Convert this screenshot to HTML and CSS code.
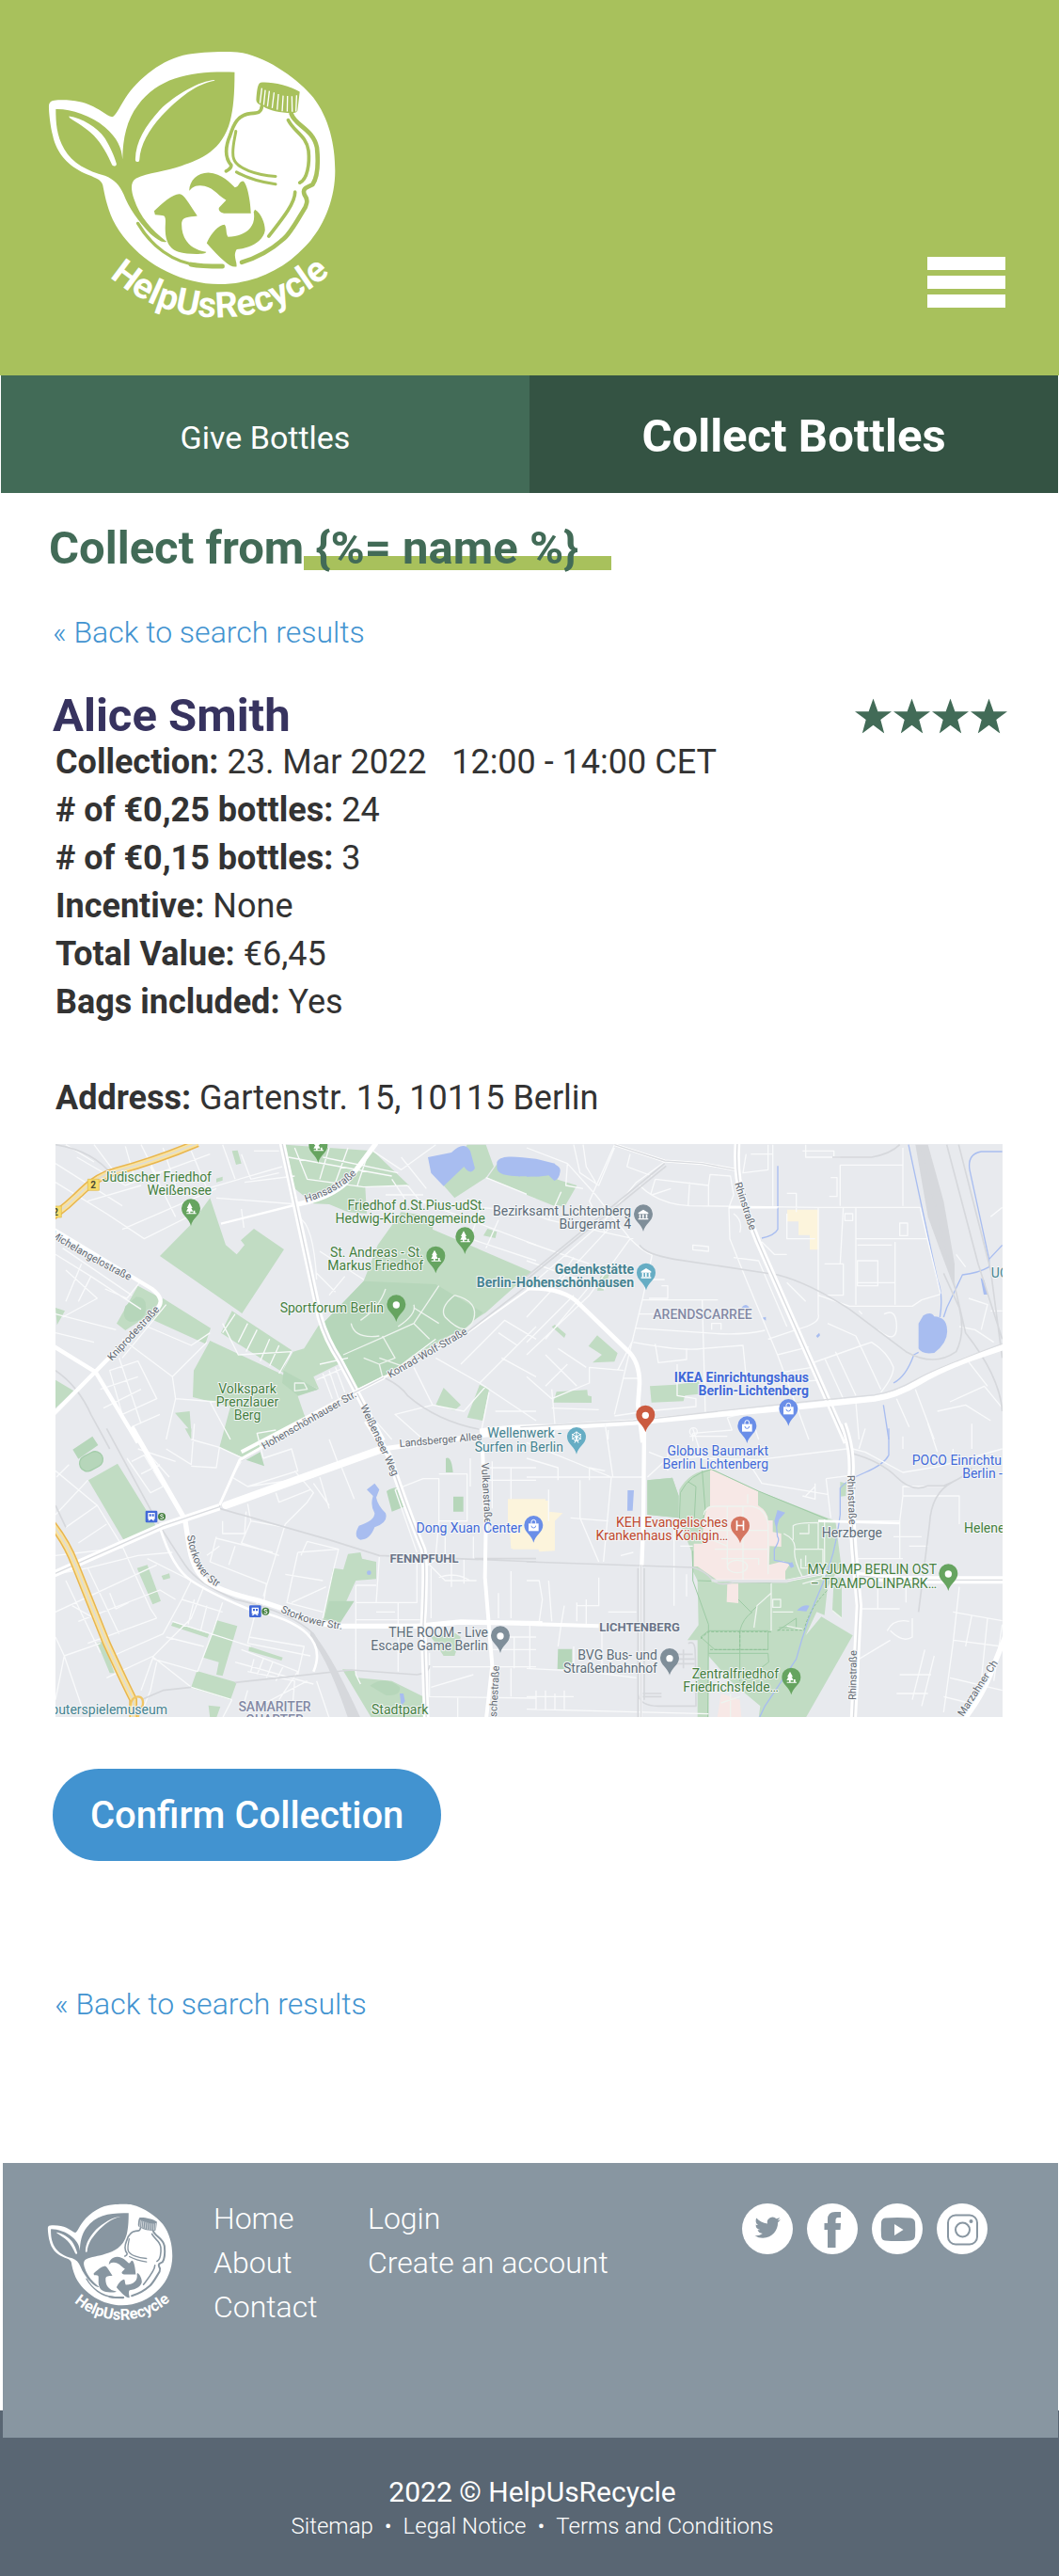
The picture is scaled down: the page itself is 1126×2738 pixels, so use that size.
FILE: index.html
```html
<!DOCTYPE html>
<html lang="en">
<head>
<meta charset="utf-8">
<meta name="viewport" content="width=device-width, initial-scale=1">
<title>HelpUsRecycle – Collect Bottles</title>
<link rel="stylesheet" href="styles.css">
</head>
<body>

<svg class="sprite" aria-hidden="true">
  <symbol id="logo" viewBox="150 158 925 868">
    <path class="ink" d="M358 372C368 370 378 348 400 312C440 250 520 185 600 172C640 165 740 160 775 168C860 185 955 255 1000 310C1050 375 1070 460 1070 545C1070 640 1030 730 975 785C900 866 800 906 700 906C560 906 420 820 360 700C340 655 334 620 328 590C323 570 300 565 270 552C220 530 180 490 168 430C160 400 155 350 156 335C158 322 168 319 185 318C280 315 310 347 350 370Z"/>
    <path class="cut" d="M749 229C749 300 745 345 735 385C710 480 640 508 580 528C530 546 470 550 435 568C415 580 418 605 428 635C445 690 490 740 532 770C520 777 500 762 480 745C440 705 410 660 395 620C382 590 365 572 335 560C280 545 230 520 205 475C180 430 178 390 178 347C220 345 290 365 335 405C375 440 388 470 391 507C392 440 405 380 440 335C510 240 620 225 749 229Z"/>
    <path class="ink" d="M685 254C640 256 560 300 510 350C465 400 433 450 432 508a6 6 0 0 0 13 2C448 460 475 415 515 370C570 310 630 265 685 256Z"/>
    <path class="ink" d="M220 370C260 375 310 405 335 440C350 465 365 495 372 522c0 8-12 10-15 2C345 495 325 458 300 432C275 408 245 390 222 375Z"/>
    <path class="cut" d="M832 262C860 258 925 270 957 292L950 352Q946 361 930 360C895 358 860 352 840 338Q818 330 818 318C820 290 822 265 832 262Z"/>
    <path class="rib" d="M836 280l-6 48M847 286l-5 48M860 289l-6 50M875 294l-6 50M889 299l-4 50M904 304l-3 50M918 305l-1 50M932 306l1 50M947 303l-2 52"/>
    <g class="line">
      <path stroke-width="11" d="M836 338C834 358 825 359 800 361C758 365 745 398 735 430C720 465 716 500 738 526C739 534 732 540 722 545"/>
      <path stroke-width="9" d="M753 418C750 440 738 480 746 505C756 538 820 558 880 562"/>
      <path stroke-width="9" d="M755 548C790 568 840 581 880 587"/>
      <path stroke-width="14" d="M930 362C942 400 1000 410 1012 470C1018 530 1010 570 998 588C975 598 965 602 972 620C986 640 978 650 975 660C950 700 930 740 905 762C865 798 820 822 772 836"/>
      <path stroke-width="11" d="M920 382C938 420 978 430 985 480C989 520 982 572 957 582"/>
      <path stroke-width="11" d="M942 612C942 650 895 705 858 753"/>
      <path stroke-width="10" d="M440 712C480 780 550 840 640 846"/>
      <path stroke-width="15" d="M610 843Q640 849 710 849"/>
    </g>
    <path class="cut" d="M604 608C605 575 630 550 665 550C710 552 735 585 750 597C765 595 762 578 775 577C788 578 800 640 801 680L715 680C700 678 694 665 702 659L722 638C690 618 678 592 640 591C618 590 612 600 604 608Z"/>
    <path class="cut" d="M492 672C520 645 550 620 572 618C587 616 600 645 630 688C600 692 583 690 580 710C578 760 605 795 658 803C662 812 600 812 570 803C530 790 526 750 528 715C530 680 525 688 495 684Z"/>
    <path class="cut" d="M814 668C835 680 847 715 846 735C842 765 805 790 756 795C742 815 758 835 755 850C735 855 705 825 660 775C670 750 695 717 717 716C725 725 720 745 728 755C790 752 818 720 810 675Z"/>
    <path id="logo-arc" fill="none" d="M350 882A525 525 0 0 0 1068 858"/>
    <text class="logo-text"><textPath href="#logo-arc">HelpUsRecycle</textPath></text>
  </symbol>

  <symbol id="star" viewBox="0 0 40 38"><path d="M20 0L25 14H40L28 23L32 38L20 29L8 38L12 23L0 14H15Z"/></symbol>

  <g id="g-pin"><path d="M0 0C-5-24-30-32-30-56a30 30 0 1 1 60 0C30-32 5-24 0 0Z"/></g>
  <g id="g-dot"><use href="#g-pin"/><circle class="glyph" cy="-54" r="11"/></g>
  <g id="g-tree"><use href="#g-pin"/><path class="glyph" d="M-4-74L-13-57H-9L-15-46H-7V-41H-14V-38H17V-41H13V-49H8V-41H-2V-46H7L1-57H5Z"/></g>
  <g id="g-bag"><use href="#g-pin"/><path class="glyph" d="M-16-61H16V-37H-16Z"/><path class="glyph-line" d="M-7-60V-66a7 7 0 0 1 14 0V-60"/><path class="glyph-cut" d="M-7-54a7 7 0 0 0 14 0"/></g>
  <g id="g-hall"><use href="#g-pin"/><path class="glyph" d="M-16-60L0-70L16-60V-56H-16ZM-16-42H16V-38H-16ZM-13-55h5v12h-5ZM-3-55h5v12h-5ZM8-55h5v12h-5Z"/></g>
  <g id="g-wheel"><use href="#g-pin"/><circle class="glyph-line" cy="-56" r="13"/><circle class="glyph" cy="-56" r="4"/><path class="glyph-line" d="M0-73V-40M-15-64L15-48M15-64L-15-48M-6-36L0-54L6-36"/></g>
  <g id="g-h"><use href="#g-pin"/><path class="glyph" d="M-13-72h5v13h16v-13h5v31h-5v-13h-16v13h-5Z"/></g>
  <g id="g-train"><rect class="train" x="-19" y="-19" width="38" height="38" rx="4"/><path class="glyph" d="M-11-12h22v20h-5l4 5h-5l-3-4h-5l-3 4h-5l4-5h-4Z"/><path class="train" d="M-7-8h6v7h-6ZM2-8h6v7h-6Z"/><circle class="sbahn" cx="33" r="12"/><path class="glyph-line" d="M38-5q-8-4-9 0t5 5t4 5t-10 1"/></g>
</svg>

<header class="top">
  <a class="top-logo" href="#" aria-label="HelpUsRecycle home"><svg viewBox="150 158 925 868" aria-hidden="true"><use href="#logo" x="150" y="158" width="925" height="868"/></svg></a>
  <button class="menu" type="button" aria-label="Menu"><span></span><span></span><span></span></button>
</header>

<nav class="tabs" aria-label="Sections">
  <a class="tab" href="#">Give Bottles</a>
  <a class="tab tab-current" href="#" aria-current="page">Collect Bottles</a>
</nav>

<main class="page">
  <h1 class="title">Collect from<span class="mark"> {%= name %}</span></h1>

  <article class="offer">
    <a class="back" href="#">« Back to search results</a>
    <div class="person">
      <h2 class="name">Alice Smith</h2>
      <div class="stars" role="img" aria-label="4 stars">
        <svg viewBox="0 0 40 38"><use href="#star"/></svg><svg viewBox="0 0 40 38"><use href="#star"/></svg><svg viewBox="0 0 40 38"><use href="#star"/></svg><svg viewBox="0 0 40 38"><use href="#star"/></svg>
      </div>
    </div>
    <div class="details">
      <p><b>Collection:</b> 23. Mar 2022 &nbsp; 12:00 - 14:00 CET</p>
      <p><b># of €0,25 bottles:</b> 24</p>
      <p><b># of €0,15 bottles:</b> 3</p>
      <p><b>Incentive:</b> None</p>
      <p><b>Total Value:</b> €6,45</p>
      <p><b>Bags included:</b> Yes</p>
      <p class="address"><b>Address:</b> Gartenstr. 15, 10115 Berlin</p>
    </div>

    <svg class="map" viewBox="0 0 1007 609" role="img" aria-label="Map of the pick-up address">
      <!-- north-west -->
      <g transform="translate(-9 -6) scale(.33333)">
        <path class="park" d="M360 375L458 275L520 190L570 340L605 370L630 340L618 325L660 288L756 354L622 558ZM520 645L660 710L745 750L800 780L865 800L800 822L820 880L830 900L700 975L625 1018L550 985L585 855L465 825L468 740ZM370 510L522 605L505 655L330 575ZM590 550L780 675L750 745L555 620ZM290 470L365 510L330 560L250 612L222 590ZM760 20L1040 40L1155 150L1015 155L1020 240L960 235L900 210L850 208L790 160ZM1010 455L1055 340L1130 235L1235 250L1230 290L1545 425L1400 555L1250 650L985 800L935 700L880 590ZM785 680L820 670L870 590L930 720L850 760L868 800L750 745ZM1340 20L1400 20L1425 90L1400 125L1300 190L1265 150ZM1440 75L1560 110L1690 150L1650 220L1560 190L1405 125ZM1265 795L1320 850L1300 868L1240 850ZM1380 785L1410 800L1390 900L1340 890ZM27 770L85 805L27 860ZM408 875L455 870L460 935ZM590 40L608 38L620 80L603 84ZM540 128l20-6v12l-20 6ZM1405 288l30 10-5 20-38-8ZM27 540l30 10-25 45Z"/>
        <path class="park-dark" d="M1010 455L1240 465L1390 555L1330 610L1240 645L1100 745L985 800L935 700L880 590ZM285 505q35 0 30 40t-50 40q-30-10-15-50ZM755 740l110 60-65 20-50-40Z"/>
        <path class="water" d="M1215 60L1290 45Q1330 5 1350 40L1365 95Q1350 120 1330 90L1265 152L1225 110ZM1435 75C1450 50 1500 60 1560 65L1620 80Q1640 110 1620 138L1590 122C1500 120 1440 125 1435 95Z"/>
        <path class="lane" d="M27 80L240 215M27 140L190 240L310 320L470 240M95 60L250 150L520 50M60 20L150 75M150 20L210 100M250 25L280 130M300 20L345 110L395 100M370 30L420 180M460 40L510 160L750 90M560 20L600 130M620 50L650 130L740 110M240 290L540 160M130 200L300 150M330 90L410 250M540 190L800 210M620 225l8 60M660 40h80M630 140L790 120M800 250q50 20 60 200M870 360L1010 450M860 430l60 60M900 500l50-60M27 370L140 440L300 545M50 350L270 500M60 420l100 90-110 60M110 400L60 520M140 440l-40 80M185 480l70 30 40-50M27 560L220 610M27 620L150 650M380 530L240 700M320 600L460 660L520 620M240 640L400 760L510 650M400 760L410 830L540 840M200 740L290 710L350 830L240 880ZM230 700l70 210M170 800l120-40M300 800L180 860M270 920L360 880M410 830L380 960M520 840L585 960M560 590L610 690L780 680M600 560l-40 60M640 590l-30 60M670 610l-35 70M710 640l-30 70M740 660l-30 65M780 680l-40 70M790 30L830 130L1010 155L1150 150M880 60L1120 110M900 30L870 130M960 30L920 140M1020 60L990 150M770 60l330 60M1040 40L1130 100L1240 20M1130 60l80 100M1150 150L1190 200L1480 230M1400 125L1560 190M1190 200L1560 340M1380 230L1350 320L1560 390M1440 260l-40 90M870 720L960 700M880 750l30 80M900 740l30 90M920 730l30 80M860 770l90-40M1080 760L1240 640M1170 730L1230 850L1330 870L1400 790M1240 700L1380 780L1560 900M1320 720L1460 580L1560 640M1380 780L1560 600M1450 700L1560 760M1500 660L1440 620M1410 810L1380 960M1430 870h130M1230 850L1110 880L1200 960M830 900L900 870M1030 880L1100 960M1080 180h120M1100 130l40 60"/>
        <path class="path" d="M945 690Q1060 640 1170 590L1250 470M1170 540L1250 590M1170 590L1220 640M1070 630L1110 700L1060 720M1120 600Q1180 560 1170 530M1000 580Q1060 540 1080 480M970 590Q980 640 1060 630M1300 500Q1380 520 1360 580T1270 570Q1250 540 1300 500M1010 700l50 20 10 40M1060 700l70 25M790 780h30l10 20-40 5Z"/>
        <path class="rail" d="M27 740Q100 790 140 880L200 990M27 20Q150 40 210 120M1080 765Q1130 790 1150 820Q1300 950 1560 940"/>
        <path class="road" stroke-width="13" d="M20 290L335 480Q380 515 350 545L20 880"/>
        <path class="road" stroke-width="13" d="M20 662L155 745L290 970"/>
        <path class="road" stroke-width="16" d="M1050 15Q980 110 950 145Q900 190 800 210"/>
        <path class="road" stroke-width="7" d="M800 210L555 272"/>
        <path class="road" stroke-width="20" d="M750 15L870 570Q890 640 935 710L1070 965"/>
        <path class="divider" d="M750 15L870 570Q890 640 935 710L1070 965"/>
        <path class="road" stroke-width="12" d="M620 1000L985 808L1075 762"/>
        <path class="divider" d="M880 870L985 808L1075 762"/>
        <path class="road" stroke-width="6" d="M1075 762L1340 620L1580 450"/>
        <path class="rail" d="M1330 625L1570 440"/>
        <path class="major-edge" d="M0 262Q60 220 110 170T220 105Q350 70 480 15"/><path class="major" d="M0 262Q60 220 110 170T220 105Q350 70 480 15"/><path class="divider" d="M0 262Q60 220 110 170T220 105Q350 70 480 15"/>
        <path class="shield" d="M130 130h36v36h-36ZM10 216h36v36h-36Z"/>
      </g>
      <!-- north-east -->
      <g transform="translate(501 -6) scale(.33333)">
        <path class="park" d="M0 130L80 115L125 155L95 218L0 180ZM90 594l35 30-5 12-40-35ZM225 628L290 685L280 712L210 715L240 690L197 662ZM95 808L193 802L195 820L207 823V843L85 842ZM393 790L475 785L550 775V815L505 820L500 838L398 842ZM235 440l30-10-20 55h-20ZM0 422l12 8-12 12Z"/>
        <path class="yellow" d="M831 227H932V355H903V308H867V265H831Z"/>
        <path class="water" d="M1250 590L1265 565Q1290 550 1300 568Q1340 570 1341 610Q1345 650 1300 684Q1260 690 1250 670ZM1448 445l12 8 10 45h-12ZM685 540q15-20 27 3l-5 10ZM751 572l12-3v12ZM923 630l10-10 3 8-8 8ZM0 66L60 80Q110 80 107 105T88 135L70 118L0 122Z"/>
        <path class="river" d="M1218 20L1310 450Q1330 500 1318 570M1517 42H1450Q1405 50 1413 100L1475 385V410Q1440 430 1390 435L1340 540L1330 570M1475 385L1517 340M1250 682L1235 690Q1210 760 1170 780M801 88V290Q790 310 750 318M1138 850L1155 960"/>
        <path class="lane" d="M0 30L130 80L220 180L330 320Q370 360 400 372L370 510L280 880M150 20L170 110L230 150L280 30M180 20L190 90L220 140M280 20L200 200L250 300M440 75L350 140L250 260L0 480M330 50L320 90L400 120M360 150Q420 210 520 215L930 220M410 130L580 150L585 115L650 120L660 180L645 220L648 320L700 450L800 690L900 960M520 140L515 215M580 150V215M400 180L460 160M410 130L395 180M130 80L125 150L180 160M0 230L70 260L110 170M70 260L340 320M0 330L200 400M0 390L250 480M150 380L80 480M260 290L0 570M330 320L200 500L0 690M150 500L0 650M210 460L60 640M370 515H610M560 515L570 880M360 560H470M345 605L570 620Q680 630 760 612M340 650Q500 680 560 670L690 660L700 760M410 655L420 715L510 705V670M0 760L80 830L200 780V730L310 740M60 690L160 790M100 670L190 730M130 720L60 790M80 800L90 910M80 860L230 865M340 640L290 740M310 765H360M280 885L380 870L540 855V830L480 820V720M640 890L720 870M640 890L655 930L530 940M530 940v25M785 20V215M700 50L690 110L770 100V20M715 50h70M880 40H980V60M890 20V60H1000M1000 85H1200V215M1000 85V215M970 125h20v60h-25M830 175h30v60M830 240v80h90M930 222V560Q940 590 860 610L770 640M1050 220V530M1050 320H1278L1255 220H930M1015 240h25v22h-25ZM1055 340H1165M1190 270h25v40h-25ZM1175 330V530M1055 460H1175M1055 390h65v80h-65ZM950 400H1010V500H950M1010 220L1000 400M930 500L1030 535H1230L1260 515L1320 497M1200 90v-60M1278 320L1320 495M1140 560q40-20 40 40t-60 10M1060 550l10 10M960 590L1050 630L1130 800M1070 660L1100 650Q1150 680 1170 730Q1170 760 1130 810M950 700L1010 830M985 680L1050 820M900 720L1070 660M800 690L900 665M820 745L910 730M830 780L940 770M660 380L740 390L830 600M660 240q30 20 20 60M530 340l50 5v15l-50-5ZM780 430L860 600M830 460L890 520M750 330L790 370H830M430 470h20v40h-60M380 450h60M590 610v-20h30v20M1050 840L1060 960M1240 800L1300 960M1310 870L1400 850L1480 900M1350 840L1460 790L1517 860M1180 830L1220 920M1400 700L1470 790M1370 370L1400 410M1410 510l60 20-20 80M1380 600L1430 610L1490 650M1480 250l37-30M1480 550h37M520 950h120M720 900L740 960M260 930V960"/>
        <path class="rail-wide" d="M1240 20H1280L1330 200L1365 400V480L1320 360L1280 250Z"/>
        <path class="rail" d="M1340 20L1440 400L1517 640M1378 20L1480 420L1517 700M1260 30L1365 470L1400 620Q1510 760 1517 870M360 340Q380 370 470 385L800 435Q900 460 1030 545L1210 680Q1300 730 1370 680Q1400 620 1380 540L1330 430M975 60H1100Q1160 50 1190 20M0 440L440 80M0 450L445 88"/>
        <path class="road" stroke-width="14" d="M0 478Q120 475 170 530L320 675Q360 710 360 780L355 850L370 970"/>
        <path class="road" stroke-width="9" d="M280 20L440 72L560 80L665 100"/><path class="divider" d="M280 20L440 72L560 80L665 100"/>
        <path class="road" stroke-width="20" d="M672 15Q665 120 690 190Q710 270 760 380L1020 970"/><path class="divider" d="M672 15Q665 120 690 190Q710 270 760 380L1020 970"/>
        <path class="road" stroke-width="7" d="M645 220H800"/>
        <path class="road" stroke-width="19" d="M-150 935Q-50 920 100 920L340 905L840 858L1110 830Q1180 820 1250 778T1420 700L1530 662"/>
        <path class="divider" d="M-20 920L340 900L900 838L1110 818Q1170 810 1240 770T1530 650"/>
      </g>
      <!-- south-west -->
      <g transform="translate(-9 304) scale(.33333)">
        <path class="park" d="M132 160L225 107L350 310L245 352ZM287 440L320 430L363 545L337 556ZM365 465l25-8 3 15-22 6ZM540 606L607 625L560 784L540 780L548 740L498 725ZM402 612L517 650L512 662L396 624ZM645 690L752 725L748 735L643 704ZM478 768L605 805L585 860L459 822ZM515 878L553 882L540 918H520ZM912 440L945 445L960 395L1000 390L1005 410L1050 420V475L985 480L955 545L935 615L880 605ZM942 763L980 765L990 790L1100 800L1200 850V918H1035ZM1225 660L1290 640L1320 660L1300 720H1265ZM160 678L180 675L215 775H200ZM440 -5h20v35Z"/>
        <path class="park-dark" d="M82 62L145 20L163 48L100 92ZM1083 195Q1105 180 1122 185L1138 245L1100 260ZM1296 212H1328V260H1296ZM1272 90Q1290 80 1295 135H1272ZM1030 815Q1080 780 1125 820Q1130 850 1080 845ZM635 95L680 70L693 115ZM900 545H980L935 615L885 600Z"/>
        <rect class="track" x="102" y="75" width="78" height="50" rx="25" transform="rotate(-28 141 100)"/>
        <path class="yellow" d="M1470 220H1590V280H1620V380H1485V330H1470Z"/>
        <path class="water" d="M1020 190L1045 170L1060 190L1050 215Q1055 240 1080 265Q1090 295 1045 310Q1030 350 1000 350Q975 340 995 305Q1045 290 1045 265Q1030 240 1040 210ZM1125 840h12l5 25-12 15ZM1020 455a7 7 0 1 0 14 0a7 7 0 1 0-14 0"/>
        <path class="lane" d="M27 130L160 240L240 370L330 570L350 600M70 110L30 150M130 160L27 270M160 240L60 310M190 300L100 360M27 400L240 375M27 460L130 440L290 400L400 390M130 440L230 650M60 480L170 710M27 580L350 430M80 560L150 600M100 610L360 510L410 540M130 680L350 600M55 720L170 680M200 520L220 570L260 550M27 660L55 720L27 860M55 720L110 880M210 720L370 650L430 540L460 480L320 410M190 790L340 720L460 600L500 500M340 720L300 830M340 730L480 770L530 640L560 550M340 725L460 820L590 860M380 660L500 690M400 610L650 690M430 540L560 580M470 540L450 620M510 560L490 640M350 740L330 830L310 880M590 860L560 918M640 770L790 800L780 918M600 740L850 810M620 700L800 770L740 860M660 600L640 680L840 720M645 660L820 690L800 780M660 730L650 770M690 730L670 780M720 740L700 790M755 750L730 800M830 800L640 900M860 800L900 918M640 830L620 900M255 90L330 200L370 180L310 80L270 100M300 140L360 110M310 60L390 150M380 60L460 110L470 -20M290 60L410 100M460 30L550 55L625 90L590 150L640 180L800 130L780 60L690 90M550 55L540 120L460 115M640 180L850 150M690 90L670 10L730 0M790 130L850 200L830 230L760 300L690 530M730 200L740 230L840 190M850 170L900 240M870 150L900 250M900 30L930 110M940 120L980 220M640 235L650 290L620 360L740 400M650 290L760 310M540 340L520 420L700 490M540 345L720 390M560 290v40h70l5-70M550 370L510 400M600 370L580 430M800 390L930 380L910 460L880 600M800 390L765 550L880 580M830 355L930 380M830 355L810 400M760 460L880 480M780 550L890 500M700 490L690 560M660 600L670 550M1110 190L1200 155L1250 155V290L1340 290L1340 140L1250 140M1110 190L1180 390M1060 405L1050 550H1180V400M985 495H1050M985 495V780L1000 810M985 550H1050M1120 550V770M1050 580h60M985 605H1190M1220 710V850L1560 855M1230 755H1560M1310 850V918M1225 820L1360 780M1260 400L1200 440V620M1220 430L1270 480L1370 480M1290 410V500M1330 410v80M1250 470q50-20 100 10M1225 600V440M1400 480L1410 620M1440 520V600M1480 520V600M1480 450V540M1410 700H1560M1430 660H1560M1490 660V760M1410 160H1560M1420 100V250M1480 120V220M1350 90V180M1400 120H1560M1360 340V410M1270 340v60M1250 290L1240 400M1480 760V850M1540 620V760"/>
        <path class="rail" d="M550 250L900 350L1060 400L1560 420M1365 410H1560M27 240L60 310M600 805L970 765L1180 780Q1220 775 1220 750M300 860L370 830L460 820M1205 400L1215 918"/>
        <path class="rail" stroke-width="13" d="M190 -5L350 290Q400 370 440 430T600 540Q780 580 850 650Q900 730 980 918"/>
        <path class="rail-wide" d="M840 640Q900 700 1000 918H960Q900 740 840 660Z"/>
        <path class="road" stroke-width="16" d="M270 -10L440 285L455 380Q470 460 520 490T680 545L770 575Q850 620 930 625H1180L1320 612L1580 617"/>
        <path class="road" stroke-width="8" d="M360 310Q400 440 460 480T640 570Q780 600 830 650T850 770"/>
        <path class="road" stroke-width="24" stroke-linecap="round" d="M570 240L1070 60"/>
        <path class="road" stroke-width="15" d="M1070 60L1400 15L1620 5"/>
        <path class="road" stroke-width="22" d="M20 460L370 305L550 245"/><path class="divider" d="M20 460L370 305L550 245L615 100L730 30"/>
        <path class="road" stroke-width="9" d="M550 240L615 95L800 -10"/>
        <path class="road" stroke-width="20" d="M1020 -30L1090 80Q1150 260 1200 380Q1210 420 1200 620L1210 930"/><path class="divider" d="M1090 80Q1150 260 1200 380Q1210 420 1200 620L1210 930"/>
        <path class="road" stroke-width="12" d="M1388 40L1400 300L1397 470L1420 750L1400 930"/>
        <path class="major-edge" d="M0 280Q60 350 90 430L190 680Q240 790 275 860V930"/><path class="major" d="M0 280Q60 350 90 430L190 680Q240 790 275 860V930"/><path class="divider" d="M0 280Q60 350 90 430L190 680Q240 790 275 860V930"/>
        <path class="ring" d="M265 880Q270 850 290 850T305 880Q290 890 290 930"/>
      </g>
      <!-- south-east -->
      <g transform="translate(501 304) scale(.33333)">
        <path class="park" d="M385 160L465 152L485 210V280L385 270ZM487 190Q520 130 590 125L740 195L985 290L1003 430L960 500L950 590L925 580L890 655L940 595L1040 655L890 918H740L745 880L650 800L580 720V918H545V670H513L548 622L545 480L530 450L525 385L487 290ZM1000 165L1020 170L1018 210L1000 212ZM980 470L1005 470V600L975 575Z"/>
        <path class="park-dark" d="M100 698H145V762H98ZM385 160L465 152L485 210V280L385 270Z"/>
        <path class="pink" d="M585 125L738 195V240Q770 260 770 288H785V325L812 330V372L775 370L773 430L820 418L838 430L825 450V480H610L545 435H533V362H560L565 270Q570 245 585 243ZM640 490H675V552L638 548ZM620 840L680 860L685 918H608Z"/>
        <path class="yellow" d="M-60 225H70V260L115 265L80 300L90 385L40 388L35 372L-50 378Z"/>
        <path class="water" d="M322 192h20l-4 65h-17ZM790 290l10-35 25 8-20 22-8 30ZM862 575q20-20 40-15l-10 18ZM835 425l12-4 6 14-10 5Z"/>
        <path class="river" d="M1155 -5V80Q1140 110 1080 135T1000 185V270Q985 400 940 500T860 730Q800 820 760 880L742 918M795 290L800 340Q810 350 790 380V415L840 425"/>
        <path class="trail" d="M487 290L490 200Q520 140 590 125L740 195L960 285M560 130L570 260L555 310M530 385V480L580 620L578 918M515 165l25 15-5 100M675 540L715 580L770 530M545 480L780 488M680 640Q690 600 720 580M555 660L600 700H770V640H580ZM680 640V800M580 712H770L772 740L680 810M800 640L860 600V630H805"/>
        <path class="dashed" d="M555 665L580 643H780M585 700H770M680 640V700M800 638H885Q900 570 960 510"/>
        <path class="lane" d="M0 40L270 150L245 420M0 150H370M250 -20L275 150M0 90L100 120V160M200 160V120L250 130M140 280L260 290M70 190V290M170 160V280L230 420M300 400L340 390M385 150L440 100L580 80M390 70L490 110M450 130V70M530 -5L560 90L735 95L1020 60M700 90L750 170L960 205M955 155L970 280M955 155L1030 145M880 210l40 10V170M920 180l-30 30M1025 290H1190V410H1050M1190 290L1200 210H1380V300M1170 340H1260M1200 210V180H1330M1220 370h60M1130 410h70M1070 570H1190M1120 470V570M1060 730L1160 670M1160 640q40 40 70 20V600M1150 640q20-40 70-30M1150 490h60v60M1040 60L1080 70L1200 135L1320 115L1517 60M1280 -20L1310 70M1420 -20V60M1380 500L1360 680L1330 900M1360 580L1517 608M1360 670L1517 690M1350 790L1517 830M1420 590L1400 690M1470 600L1450 800M1517 620L1490 800M1330 850L1410 870M0 760L190 770L350 790M0 890L580 905M30 830V890M60 830V890M90 840V890M120 830V890M0 850H150M50 540L40 610M80 610L70 480M120 560L110 620L100 690M160 550V610M190 540V620M160 560H230V470M0 480H40L50 540M260 580H350M470 300V560M510 460V530M490 370h40M380 630H480M240 640V760M150 690V760M1270 700L1230 860M1300 720L1260 880M1190 780H1290M1180 840H1280M1080 -5L1060 60M1200 20V60M1360 60V100"/>
        <path class="path" d="M565 270Q570 243 600 243H700Q760 240 770 300V460M580 320H770M600 380H770M640 245V430M690 245V480M580 345L640 370M620 410H740V430M640 435a32 20 0 1 0 64 0a32 20 0 1 0-64 0M820 330Q860 350 855 380T880 470M855 380H945V470M850 350V305Q860 295 930 295V380M870 330h30v-30M875 410v30h40M890 400v35M950 285V470L880 490M780 488V640M780 520L735 560L725 630M785 540h25v25h-25ZM785 580H850M830 625L880 635M705 205v30M975 575L1005 600M620 870L680 850M650 840V918"/>
        <path class="rail" d="M0 420L530 438Q570 450 590 475T660 485H830L960 440M1040 75Q1130 100 1180 150T1280 178H1330Q1400 150 1420 120M1360 165Q1290 200 1285 300L1250 580M355 440V918M375 440V860M515 680q20-10 22 20T540 880L420 880Q360 880 355 840M370 840H430M370 850H430M460 715H530M460 730H535M460 745H535M500 700V760"/>
        <path class="road" stroke-width="13" d="M375 -10L372 300L367 430"/>
        <path class="road" stroke-width="7" d="M365 430V918"/><path class="divider" d="M365 430V918"/>
        <path class="road" stroke-width="12" d="M-20 617L230 625"/>
        <path class="road" stroke-width="8" d="M375 625H360M930 290L1190 297M590 480H830L960 455"/><path class="divider" d="M590 480H830L960 455"/>
        <path class="road" stroke-width="22" d="M1010 -20Q1040 60 1035 140Q1035 300 1050 450L1060 560L1042 925"/><path class="divider" d="M1010 -20Q1040 60 1035 140Q1035 300 1050 450L1060 560L1042 925"/>
        <path class="road" stroke-width="24" d="M1060 465L1200 478L1530 478"/><path class="divider" d="M1060 465L1200 478L1530 478"/>
        <path class="road" stroke-width="17" d="M1530 650L1490 750Q1460 840 1390 930"/>
        <path class="lane" d="M520 5a12 12 0 1 0 24 0a12 12 0 1 0-24 0"/>
      </g>

      <g class="street">
        <path id="s-hansa" d="M266 62Q300 52 319 33"/><text><textPath href="#s-hansa">Hansastraße</textPath></text>
        <path id="s-michel" d="M-6 98Q34 123 80 146"/><text><textPath href="#s-michel">Michelangelostraße</textPath></text>
        <text transform="translate(60 231) rotate(-47)">Kniprodestraße</text>
        <text transform="translate(356 249) rotate(-30)">Konrad-Wolf-Straße</text>
        <text transform="translate(222 325) rotate(-30)">Hohenschönhauser Str.</text>
        <text transform="translate(324 279) rotate(65)">Weißenseer Weg</text>
        <text transform="translate(366 322) rotate(-5)">Landsberger Allee</text>
        <path id="s-stork1" d="M140 416Q146 458 172 471"/><text><textPath href="#s-stork1">Storkower Str.</textPath></text>
        <path id="s-stork2" d="M239 497Q265 511 305 516"/><text><textPath href="#s-stork2">Storkower Str.</textPath></text>
        <text transform="translate(453 339) rotate(87)">Vulkanstraße</text>
        <text transform="translate(469 609) rotate(-87)">schestraße</text>
        <text transform="translate(722 42) rotate(72)">Rhinstraße</text>
        <text transform="translate(842 352) rotate(88)">Rhinstraße</text>
        <text transform="translate(851 591) rotate(-89)">Rhinstraße</text>
        <text transform="translate(965 609) rotate(-57)">Marzahner Ch</text>
      </g>

      <g class="place green">
        <g text-anchor="end">
          <text x="166" y="40">Jüdischer Friedhof</text><text x="166" y="54">Weißensee</text>
          <text x="457" y="70">Friedhof d.St.Pius-udSt.</text><text x="457" y="84">Hedwig-Kirchengemeinde</text>
          <text x="391" y="120">St. Andreas - St.</text><text x="391" y="134">Markus Friedhof</text>
          <text x="349" y="179">Sportforum Berlin</text>
          <text x="937" y="457">MYJUMP BERLIN OST</text><text x="937" y="472">– TRAMPOLINPARK…</text>
          <text x="769" y="568">Zentralfriedhof</text><text x="769" y="582">Friedrichsfelde…</text>
        </g>
        <g text-anchor="middle"><text x="204" y="265">Volkspark</text><text x="204" y="279">Prenzlauer</text><text x="204" y="293">Berg</text></g>
        <text x="336" y="606">Stadtpark</text><text x="966" y="413">Helene</text>
      </g>
      <g class="place slate" text-anchor="end">
        <text x="612" y="76">Bezirksamt Lichtenberg</text><text x="612" y="90">Bürgeramt 4</text>
        <text x="460" y="524">THE ROOM - Live</text><text x="460" y="538">Escape Game Berlin</text>
        <text x="640" y="548">BVG Bus- und</text><text x="640" y="562">Straßenbahnhof</text>
        <text x="879" y="418">Herzberge</text>
      </g>
      <g class="place teal" text-anchor="end">
        <text class="strong" x="615" y="138">Gedenkstätte</text><text class="strong" x="615" y="152">Berlin-Hohenschönhausen</text>
        <text x="538" y="312">Wellenwerk -</text><text x="540" y="327">Surfen in Berlin</text>
        <text x="119" y="606">puterspielemuseum</text><text x="1013" y="142">UC</text>
      </g>
      <g class="place blue" text-anchor="end">
        <text class="strong" x="801" y="253">IKEA Einrichtungshaus</text><text class="strong" x="801" y="267">Berlin-Lichtenberg</text>
        <text x="758" y="331">Globus Baumarkt</text><text x="758" y="345">Berlin Lichtenberg</text>
        <text x="496" y="413">Dong Xuan Center</text>
        <text x="1006" y="341">POCO Einrichtu</text><text x="1007" y="355">Berlin -</text>
      </g>
      <g class="place red" text-anchor="end"><text x="715" y="407">KEH Evangelisches</text><text x="715" y="421">Krankenhaus Königin…</text></g>
      <g class="district" text-anchor="middle">
        <text class="faint" x="688" y="186">ARENDSCARREE</text><text x="392" y="445">FENNPFUHL</text><text x="621" y="518">LICHTENBERG</text>
        <text class="faint" x="233" y="603">SAMARITER</text><text class="faint" x="233" y="617">QUARTER</text>
      </g>
      <text class="number" x="40" y="47" text-anchor="middle">2</text><text class="number" x="0" y="76" text-anchor="middle">2</text>

      <g transform="scale(.33333)">
        <g class="pin-green"><use href="#g-tree" x="432" y="261"/><use href="#g-tree" x="838" y="60"/><use href="#g-tree" x="1306" y="351"/><use href="#g-tree" x="1213" y="412"/><use href="#g-dot" x="1087" y="567"/><use href="#g-dot" x="2848" y="1425"/><use href="#g-tree" x="2347" y="1756"/></g>
        <g class="pin-slate"><use href="#g-hall" x="1875" y="279"/><use href="#g-dot" x="1419" y="1623"/><use href="#g-dot" x="1959" y="1694"/></g>
        <g class="pin-teal"><use href="#g-hall" x="1884" y="466"/><use href="#g-wheel" x="1662" y="989"/></g>
        <g class="pin-blue"><use href="#g-bag" x="2338" y="899"/><use href="#g-bag" x="2206" y="954"/><use href="#g-bag" x="1525" y="1271"/></g>
        <g class="pin-red"><use href="#g-dot" x="1882" y="919"/></g>
        <g class="pin-coral"><use href="#g-h" x="2184" y="1273"/></g>
        <use href="#g-train" x="306" y="1188"/><use href="#g-train" x="637" y="1490"/>
      </g>
    </svg>

    <button class="confirm" type="button">Confirm Collection</button>
    <a class="back back-end" href="#">« Back to search results</a>
  </article>
</main>

<footer class="footer">
  <div class="footer-main">
    <a class="footer-logo" href="#" aria-label="HelpUsRecycle home"><svg viewBox="150 158 925 868" aria-hidden="true"><use href="#logo" x="150" y="158" width="925" height="868"/></svg></a>
    <ul class="links links-site"><li><a href="#">Home</a></li><li><a href="#">About</a></li><li><a href="#">Contact</a></li></ul>
    <ul class="links"><li><a href="#">Login</a></li><li><a href="#">Create an account</a></li></ul>
    <div class="social">
      <a href="#" aria-label="Twitter"><svg viewBox="0 0 54 54"><circle cx="27" cy="27" r="27"/><path transform="translate(13.500 12) scale(1.140)" d="M23.950 4.570a10 10 0 0 1-2.820.77 4.960 4.960 0 0 0 2.160-2.720c-.95.55-2 .96-3.130 1.180a4.920 4.920 0 0 0-8.380 4.480C7.690 8.100 4.070 6.130 1.640 3.160a4.820 4.820 0 0 0-.66 2.480c0 1.710.87 3.210 2.190 4.100a4.900 4.900 0 0 1-2.230-.62v.06a4.920 4.920 0 0 0 3.950 4.830 5 5 0 0 1-2.210.08 4.940 4.940 0 0 0 4.600 3.420A9.870 9.870 0 0 1 0 19.540a13.990 13.990 0 0 0 7.560 2.210c9.050 0 14-7.500 14-13.980 0-.21 0-.42-.02-.63a9.940 9.940 0 0 0 2.460-2.550Z"/></svg></a>
      <a href="#" aria-label="Facebook"><svg viewBox="0 0 54 54"><circle cx="27" cy="27" r="27"/><path d="M22 47V28H18.500V21H22V17Q22 9 30 9H36V15H32.500Q30.500 15 30.500 17.500V21H36L35.500 28H30.500V47Z"/></svg></a>
      <a href="#" aria-label="YouTube"><svg viewBox="0 0 54 54"><circle cx="27" cy="27" r="27"/><path fill-rule="evenodd" d="M14 15.500Q27 14.500 41 15.500Q45.500 16 46 20Q46.500 28 46 35Q45.500 39 41 39.500Q27 40.500 14 39.500Q10.500 39 10 35Q9.500 28 10 20Q10.500 16 14 15.500ZM24 22V34L33.500 28Z"/></svg></a>
      <a href="#" aria-label="Instagram"><svg viewBox="0 0 54 54"><circle cx="27" cy="27" r="27"/><g class="outline"><rect x="12" y="12.500" width="31" height="31" rx="8"/><circle cx="27.500" cy="28" r="7.500"/></g><path d="M34.500 19a2 2 0 1 0 4 0a2 2 0 1 0-4 0Z"/></svg></a>
    </div>
  </div>
  <div class="legal">
    <p class="copyright">2022 © HelpUsRecycle</p>
    <p class="legal-links"><a href="#">Sitemap</a><span>•</span><a href="#">Legal Notice</a><span>•</span><a href="#">Terms and Conditions</a></p>
  </div>
</footer>
</body>
</html>
```
FILE: styles.css
```css
:root {
  --lime: #a8c15c;
  --green: #426b57;
  --green-dark: #345343;
  --blue: #4293d0;
  --navy: #37335f;
  --text: #333333;
  --steel: #8896a1;
  --steel-dark: #596673;
}

* { box-sizing: border-box; }

body {
  margin: 0;
  background: #fff;
  color: var(--text);
  font-family: Roboto, "Liberation Sans", sans-serif;
}

h1, h2, p, ul { margin: 0; padding: 0; }
a { color: inherit; text-decoration: none; }
svg { display: block; }
.sprite { position: absolute; width: 0; height: 0; }

/* Logo */
.ink { fill: #fff; }
.cut { fill: var(--logo-ground); }
.line { fill: none; stroke: var(--logo-ground); stroke-linecap: round; stroke-linejoin: round; }
.rib { fill: none; stroke: #fff; stroke-width: 4; }
.logo-text { fill: #fff; font-size: 114px; font-weight: 700; }

/* Header */
.top {
  --logo-ground: var(--lime);
  display: flex;
  justify-content: space-between;
  align-items: flex-end;
  padding: 53px 57px 57px 50px;
  background: var(--lime);
}
.top-logo { width: 308px; }
.menu {
  display: flex;
  flex-direction: column;
  gap: 6px;
  width: 83px;
  margin: 0 0 15px;
  padding: 0;
  border: 0;
  background: none;
}
.menu span { height: 14px; background: #fff; }

.tabs { display: flex; margin: 0 1px; }
.tab {
  display: flex;
  flex: 1;
  align-items: center;
  justify-content: center;
  height: 125px;
  padding-top: 6px;
  background: var(--green);
  color: #fff;
  font-size: 34px;
}
.tab-current { padding-top: 4px; background: var(--green-dark); font-size: 49px; font-weight: 700; }

/* Content */
.page { padding: 31px 55px 150px 52px; }
.title { color: var(--green); font-size: 49px; line-height: 56px; }
.mark {
  padding-right: 35px;
  background: linear-gradient(var(--lime), var(--lime)) 0 37px / 100% 15px no-repeat;
  white-space: pre;
}
.offer { display: flex; flex-direction: column; align-items: flex-start; padding-left: 4px; }
.back { margin-top: 42px; color: var(--blue); font-size: 32px; font-weight: 300; line-height: 38px; }
.person { display: flex; align-items: center; justify-content: space-between; width: 100%; margin-top: 45px; }
.name { color: var(--navy); font-size: 49px; line-height: 49px; }
.stars { display: flex; gap: 2px; fill: var(--green); }
.stars svg { width: 39px; height: 38px; }
.details { padding-left: 3px; font-size: 36px; line-height: 51px; }
.address { margin-top: 51px; }
.confirm {
  margin-top: 55px;
  padding: 0 40px;
  height: 98px;
  border: 0;
  border-radius: 49px;
  background: var(--blue);
  color: #fff;
  font: 500 40px Roboto, "Liberation Sans", sans-serif;
}
.back-end { margin: 133px 0 0 2px; }

/* Map */
.map {
  align-self: stretch;
  width: auto;
  margin: 23px 5px 0 3px;
  overflow: hidden;
  background: #e8eaee;
}
.park { fill: #c1dcc3; }
.park-dark { fill: #b6d6ba; }
.water { fill: #a8bdf0; }
.yellow { fill: #fcf4dc; }
.pink { fill: #f7e8e6; }
.rail-wide { fill: #d6d8dc; }
.shield { fill: #f7dd6b; stroke: #e0b84a; stroke-width: 2; }
.river, .lane, .path, .rail, .road, .divider, .major, .major-edge, .trail, .dashed, .ring, .track { fill: none; stroke-linejoin: round; }
.river { stroke: #a8bdf0; stroke-width: 4; }
.lane { stroke: #f9fafb; stroke-width: 4; }
.path { stroke: #eef4ef; stroke-width: 4; }
.rail { stroke: #d6d8dc; stroke-width: 5; }
.road { stroke: #fff; }
.divider { stroke: #d9dbdf; stroke-width: 4; }
.major-edge { stroke: #e9b64d; stroke-width: 26; }
.major { stroke: #f8e2a0; stroke-width: 17; }
.ring { stroke: #f0c665; stroke-width: 7; }
.track { stroke: #a4cdaa; stroke-width: 4; fill: #b6d6ba; }
.trail { stroke: #9dcaa4; stroke-width: 3; }
.dashed { stroke: #8fc297; stroke-width: 3; stroke-dasharray: 9 5; }

.map text { paint-order: stroke; stroke: #f4f6f7; stroke-width: 2px; stroke-linejoin: round; }
.street { fill: none; font-size: 11px; }
.street text { fill: #636973; }
.place { font-size: 14px; }
.district { fill: #6a7488; font-size: 13px; font-weight: 700; }
.faint { fill: #8389a5; font-size: 14px; font-weight: 500; }
.strong { font-weight: 700; }
.green { fill: #45803f; }
.slate { fill: #5d6c79; }
.teal { fill: #458391; }
.blue { fill: #4269d8; }
.red { fill: #c0492f; }
.map .number { stroke: none; fill: #4c4a35; font-size: 10px; font-weight: 700; }
.pin-green { fill: #66a460; }
.pin-slate { fill: #7f8e99; }
.pin-teal { fill: #66adc4; }
.pin-blue { fill: #6a8ee8; }
.pin-red { fill: #cb5b40; }
.pin-coral { fill: #d57560; }
.glyph { fill: #fff; }
.glyph-line { fill: none; stroke: #fff; stroke-width: 3; }
.glyph-cut { fill: none; stroke: #6a8ee8; stroke-width: 3; }
.train { fill: #4269d8; }
.sbahn { fill: #45803f; }

/* Footer */
.footer { background: linear-gradient(#fff 263px, var(--steel-dark) 263px); }
.footer-main {
  --logo-ground: var(--steel);
  display: flex;
  align-items: flex-start;
  min-height: 292px;
  margin: 0 1px 0 3px;
  padding: 36px 75px 36px 47px;
  background: var(--steel);
  color: #fff;
}
.footer-logo { width: 134px; margin-top: 7px; }
.links { list-style: none; font-size: 32px; font-weight: 300; line-height: 47px; }
.links-site { width: 164px; margin-left: 43px; }
.social { display: flex; gap: 15px; margin: 7px 0 0 auto; }
.social svg { width: 54px; height: 54px; fill: var(--steel); }
.social svg > circle { fill: #fff; }
.outline { fill: none; stroke: var(--steel); stroke-width: 2; }
.legal { padding: 38px 0 36px 6px; color: #fff; text-align: center; }
.copyright { font-size: 30px; line-height: 40px; }
.legal-links { display: flex; flex-wrap: wrap; justify-content: center; gap: 0 12px; font-size: 24px; font-weight: 300; line-height: 33px; }
```
